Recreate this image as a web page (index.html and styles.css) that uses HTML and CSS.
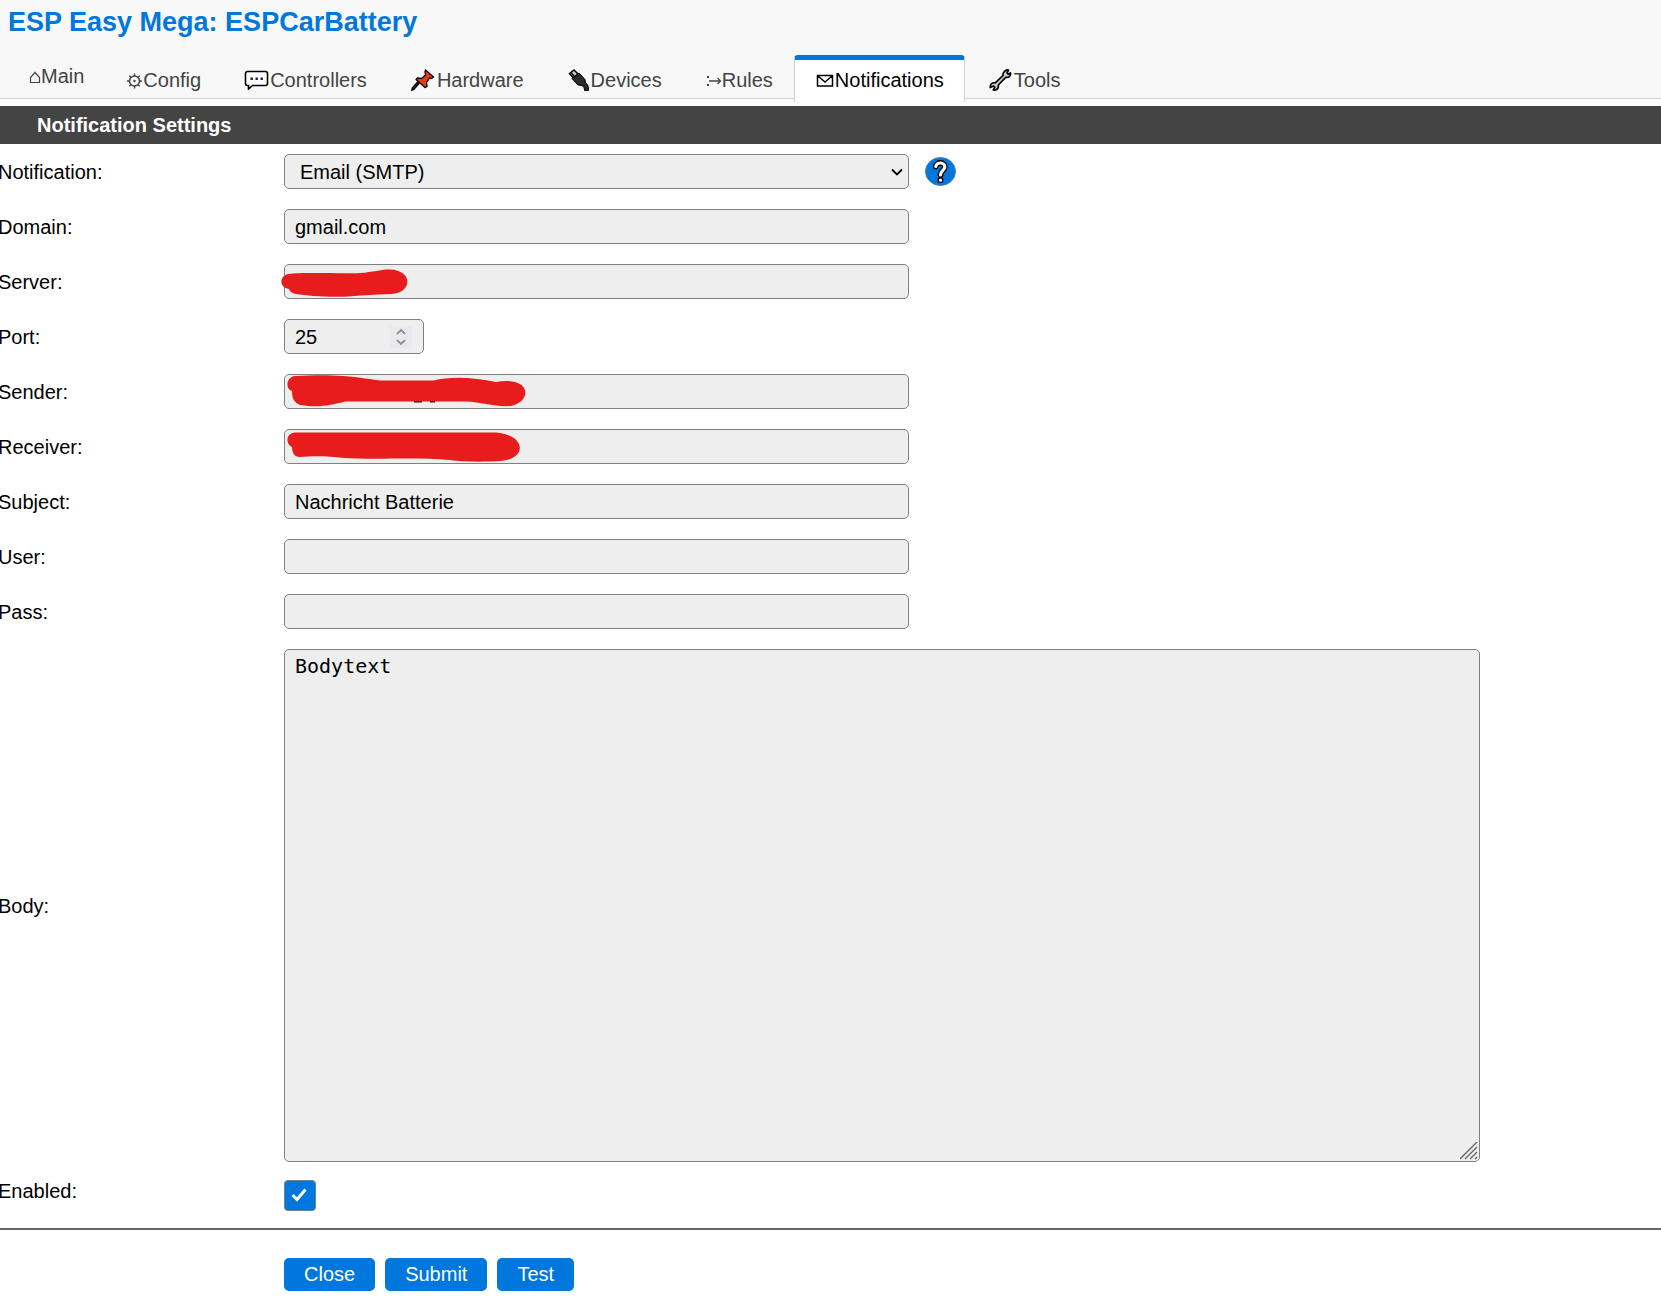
FILE: index.html
```html
<!DOCTYPE html>
<html lang="en">
<head>
<meta charset="utf-8">
<title>ESPCarBattery</title>
<link rel="stylesheet" href="styles.css">
</head>
<body>
<header class="header">
  <h1 class="title">ESP Easy Mega: ESPCarBattery</h1>
  <nav class="menu">
    <a class="tab tab-short" href="#main">
      <svg class="icon" width="12" height="20" viewBox="0 0 12 20" aria-hidden="true"><path d="M1.500 11.500 6 6.500 10.500 11.500V16.500H1.500Z" fill="none" stroke="#444" stroke-width="1.200"/></svg>Main</a>
    <a class="tab" href="#config">
      <svg class="icon" width="17" height="20" viewBox="0 0 17 20" aria-hidden="true"><g fill="none" stroke="#444" stroke-width="1.500"><circle cx="8.500" cy="11" r="5"/><path d="M8.500 6V3.500M8.500 16v2.500M3.500 11H1M13.500 11H16M5 7.500 3.300 5.800M12 7.500l1.700-1.700M5 14.500l-1.700 1.700M12 14.500l1.700 1.700"/></g><circle cx="8.500" cy="11" r="1.200" fill="#444"/></svg>Config</a>
    <a class="tab" href="#controllers">
      <svg class="icon" width="27" height="20" viewBox="0 0 27 20" aria-hidden="true"><path d="M4.500 1.500h18a2 2 0 0 1 2 2v10a2 2 0 0 1-2 2H9.500l-4 3.500v-3.500h-1a2 2 0 0 1-2-2v-10a2 2 0 0 1 2-2z" fill="#fff" stroke="#000" stroke-width="1.600"/><path d="M7.500 7.500h2.400v2.400H7.500zM12.500 7.500h2.400v2.400h-2.400zM17.500 7.500h2.400v2.400h-2.400z" fill="#222"/></svg>Controllers</a>
    <a class="tab" href="#hardware">
      <svg class="icon" width="28" height="22" viewBox="0 0 28 22" aria-hidden="true"><path d="M12 12 5 20l-2 1 .500-2L10.500 11z" fill="#ddd" stroke="#000" stroke-width="1.600"/><path d="M16.500 1 24.500 8l-2 1.500-2-.300-3 4.300 .500 4-2 1L7 10.500l1.500-1.500 4 .5 4-3.500-.5-3z" fill="#e83c10" stroke="#000" stroke-width="1.300" stroke-linejoin="round"/></svg>Hardware</a>
    <a class="tab" href="#devices">
      <svg class="icon" width="25" height="22" viewBox="0 0 25 22" aria-hidden="true"><path d="M3.500 4.500 8 1 12 5 7.500 9z" fill="#ccc" stroke="#000" stroke-width="1.500"/><path d="M6 9.500 13 4l6 6.500.500 3.500c2.500 1 3 4 3 7.500h-4c0-2-.500-4-2.500-5l-4-.500z" fill="#2b2b2b" stroke="#000"/><path d="M5 3.500 9 8" stroke="#111" stroke-width="1.500"/></svg>Devices</a>
    <a class="tab" href="#rules">
      <svg class="icon" width="18" height="20" viewBox="0 0 18 20" aria-hidden="true"><path d="M3 6h2v2H3zM3 14h2v2H3z" fill="#444"/><path d="M5 11h11.500M13.500 8l3 3-3 3" fill="none" stroke="#444" stroke-width="1.300"/></svg>Rules</a>
    <a class="tab tab-active" href="#notifications" aria-current="page">
      <svg class="icon" width="20" height="20" viewBox="0 0 20 20" aria-hidden="true"><path d="M2.500 5.500h15v10.500h-15zM3 6l7 6 7-6" fill="none" stroke="#000" stroke-width="1.500"/></svg>Notifications</a>
    <a class="tab" href="#tools">
      <svg class="icon" width="28" height="22" viewBox="0 0 28 22" aria-hidden="true"><path d="M19 2c1.500-1.300 3.500-1 3.500-1l-1.500 3 1.200 1.200 2.300-1.200c.5 3-2 5-4.800 4.300L12.300 16c.7 3.500-2 5.500-5 5l1.500-2.800-1.200-1.200-3.300 1.500c-.3-3.500 2-5.200 5-4.600L17 6.500C16.800 4.500 17.500 3 19 2z" fill="#ccc" stroke="#000" stroke-width="1.700" stroke-linejoin="round"/></svg>Tools</a>
  </nav>
</header>
<main>
  <h2 class="section">Notification Settings</h2>
  <form class="form">
    <div class="row">
      <label for="type">Notification:</label>
      <div class="cell">
        <div class="field">
          <select id="type" class="control select"><option>Email (SMTP)</option></select>
          <svg class="arrow" width="12" height="8" viewBox="0 0 12 8" aria-hidden="true"><path d="M1 1.500 6 6.500 11 1.500" fill="none" stroke="#000" stroke-width="1.800"/></svg>
        </div>
        <a class="help" href="#help" aria-label="Help">
          <svg width="31" height="29" viewBox="0 0 31 29" aria-hidden="true"><ellipse cx="15.500" cy="14.500" rx="15" ry="14" fill="#0077dd" stroke="#4a7fae"/><g fill="none" stroke-linecap="round"><path d="M10.800 9.500c.5-5 9.500-4.500 9 .500-.4 3.500-4 3.500-4.300 8M15.500 23v.2" stroke="#000" stroke-width="5.800"/><path d="M10.800 9.500c.5-5 9.500-4.500 9 .500-.4 3.500-4 3.500-4.300 8M15.500 23v.2" stroke="#fff" stroke-width="3.200"/></g></svg>
        </a>
      </div>
    </div>
    <div class="row">
      <label for="domain">Domain:</label>
      <div class="cell"><div class="field"><input id="domain" class="control" type="text" value="gmail.com"></div></div>
    </div>
    <div class="row">
      <label for="server">Server:</label>
      <div class="cell"><div class="field"><input id="server" class="control" type="text">
        <svg class="mark" width="240" height="35" viewBox="0 0 240 35" aria-hidden="true"><path d="M4 10C20 8 60 10 76 9 90 8 98 5 106 5.500 129 6 129 29 107 30 90 31 80 31 70 32 50 34 25 32 12 30 7 29 5 26 5 25-5 24-5 12 4 10Z"/></svg>
      </div></div>
    </div>
    <div class="row">
      <label for="port">Port:</label>
      <div class="cell"><div class="field field-small"><input id="port" class="control" type="number" value="25">
        <svg class="spinner" width="22" height="22" viewBox="0 0 22 22" aria-hidden="true"><path d="M0 0h22v22H0z" fill="#e9e9ed"/><path d="M7 8l4-4 4 4M7 14l4 4 4-4" fill="none" stroke="#8f8f9d" stroke-width="1.800"/></svg>
      </div></div>
    </div>
    <div class="row">
      <label for="sender">Sender:</label>
      <div class="cell"><div class="field"><input id="sender" class="control" type="text">
        <svg class="mark" width="245" height="35" viewBox="0 0 245 35" aria-hidden="true"><path d="M130 26h8v2.500h-8zM146 26h5v2.500h-5z" fill="#111"/><path d="M11 2C30 1 45 1 59 2 75 3 90 6 97 6.500H150C165 2 190 3 212 8 247 2 249 27 227 32 210 33 198 28 182 27.500H61C48 31 35 34 16 31 9 28 8 23 8 17 1 15 2 3 11 2Z"/></svg>
      </div></div>
    </div>
    <div class="row">
      <label for="receiver">Receiver:</label>
      <div class="cell"><div class="field"><input id="receiver" class="control" type="text">
        <svg class="mark" width="245" height="35" viewBox="0 0 245 35" aria-hidden="true"><path d="M11 3.500H212C242 6 244 30 216 32 200 33 180 33 165 31 135 28 90 31 60 29 45 27 28 27 16 28 10 28 8 23 8 18 1 15 2 4 11 3.500Z"/></svg>
      </div></div>
    </div>
    <div class="row">
      <label for="subject">Subject:</label>
      <div class="cell"><div class="field"><input id="subject" class="control" type="text" value="Nachricht Batterie"></div></div>
    </div>
    <div class="row">
      <label for="user">User:</label>
      <div class="cell"><div class="field"><input id="user" class="control" type="text"></div></div>
    </div>
    <div class="row">
      <label for="pass">Pass:</label>
      <div class="cell"><div class="field"><input id="pass" class="control" type="password"></div></div>
    </div>
    <div class="row">
      <label for="body">Body:</label>
      <div class="body-field">
        <textarea id="body" class="control body-text" rows="20">Bodytext</textarea>
        <svg class="grip" width="18" height="18" viewBox="0 0 18 18" aria-hidden="true"><path d="M0 17 17 0M5 17 17 5M10 17l7-7M15 17l2-2" stroke="#666" stroke-width="1.400"/></svg>
      </div>
    </div>
    <div class="row row-check">
      <label for="enabled">Enabled:</label>
      <div class="check">
        <input id="enabled" class="checkbox" type="checkbox" checked>
        <svg class="tick" width="16" height="14" viewBox="0 0 16 14" aria-hidden="true"><path d="M1.500 7 6 11.500 14.500 1.500" fill="none" stroke="#fff" stroke-width="3"/></svg>
      </div>
    </div>
    <hr class="rule">
    <div class="actions">
      <button class="button" type="button">Close</button>
      <button class="button" type="submit">Submit</button>
      <button class="button" type="button">Test</button>
    </div>
  </form>
</main>
</body>
</html>
```
FILE: styles.css
```css
* {
  box-sizing: border-box;
}

body {
  margin: 0;
  background: #fff;
  color: #000;
  font: 20px/24px "Liberation Sans", Arial, sans-serif;
}

.header {
  padding: 6px 8px 0;
  background: #f8f8f8;
  border-bottom: 1px solid #d0d0d0;
}

.title {
  margin: 0 0 17px;
  color: #07d;
  font-size: 27px;
  line-height: 32px;
}

.menu {
  display: flex;
  align-items: flex-start;
  height: 43px;
}

.tab {
  display: flex;
  align-items: center;
  height: 47px;
  padding: 0 20px 3px;
  border: 1px solid transparent;
  border-top: 5px solid transparent;
  border-bottom: 0;
  border-radius: 4px 4px 0 0;
  color: #444;
  text-decoration: none;
}

.tab-short {
  height: 39px;
}

.tab-active {
  background: #fff;
  border-color: #07d #d0d0d0;
  color: #000;
}

.tab .icon {
  flex: none;
}

.section {
  margin: 7px 0 0;
  padding: 7px 37px;
  background: #444;
  color: #fff;
  font-size: 20px;
  line-height: 24px;
}

.form {
  display: flex;
  flex-direction: column;
  gap: 20px;
  padding-top: 10px;
}

.row {
  display: grid;
  grid-template-columns: 286px 1fr;
  align-items: center;
  margin-left: -2px;
}

.cell {
  display: flex;
  align-items: center;
  gap: 16px;
}

.field {
  position: relative;
  width: 625px;
}

.field-small {
  width: 140px;
}

.control {
  display: block;
  width: 100%;
  height: 35px;
  margin: 0;
  padding: 2px 10px 0;
  background: #eee;
  border: 1px solid #808080;
  border-radius: 5px;
  color: #000;
  font: inherit;
  appearance: none;
}

.select {
  padding: 0 15px;
}

.control[type="number"] {
  appearance: textfield;
}

.arrow {
  position: absolute;
  top: 14px;
  right: 6px;
  pointer-events: none;
}

.spinner {
  position: absolute;
  top: 7px;
  right: 12px;
}

.mark {
  position: absolute;
  top: 0;
  left: 0;
  overflow: visible;
  fill: #e81c1c;
}

.help svg {
  display: block;
}

.body-field {
  position: relative;
  width: calc(100% - 181px);
}

.body-text {
  height: 513px;
  padding: 4px 10px;
  font-family: "DejaVu Sans Mono", monospace;
  resize: none;
}

.grip {
  position: absolute;
  right: 2px;
  bottom: 2px;
  pointer-events: none;
}

.row-check {
  align-items: start;
  margin-top: -2px;
  line-height: 22px;
}

.check {
  position: relative;
}

.checkbox {
  display: block;
  width: 32px;
  height: 31px;
  margin: 0;
  background: #07d;
  border: 1px solid #6a7f94;
  border-radius: 4px;
  appearance: none;
}

.tick {
  position: absolute;
  top: 8px;
  left: 7px;
  pointer-events: none;
}

.rule {
  width: 100%;
  height: 2px;
  margin: -3px 0 0;
  border: 0;
  background: #666;
}

.actions {
  display: flex;
  gap: 10px;
  padding: 8px 0 10px 284px;
}

.button {
  height: 33px;
  margin: 0;
  padding: 0 20px 2px;
  background: #07d;
  border: 0;
  border-radius: 5px;
  color: #fff;
  font: inherit;
}
```
